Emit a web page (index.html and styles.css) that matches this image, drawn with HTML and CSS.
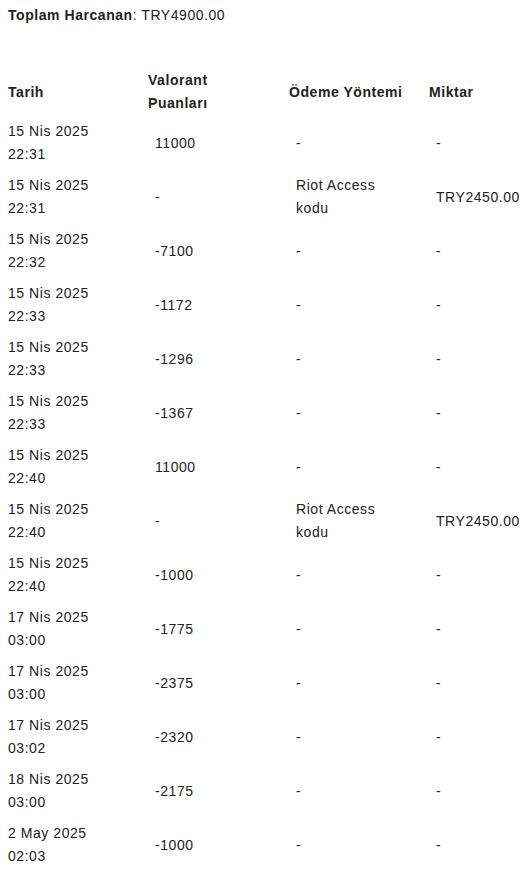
FILE: index.html
```html
<!DOCTYPE html>
<html lang="tr">
<head>
    <meta charset="UTF-8">
    <meta name="viewport" content="width=device-width, initial-scale=1.0">
    <title>Harcama Geçmişi</title>
    <link rel="stylesheet" href="styles.css">
</head>
<body>

<p class="total"><strong>Toplam Harcanan</strong>: TRY4900.00</p>

<table class="history">
    <colgroup>
        <col class="c-date">
        <col class="c-vp">
        <col class="c-method">
        <col class="c-amount">
    </colgroup>
    <thead>
        <tr>
            <th>Tarih</th>
            <th>Valorant Puanları</th>
            <th>Ödeme Yöntemi</th>
            <th>Miktar</th>
        </tr>
    </thead>
    <tbody>
        <tr><td>15 Nis 2025 22:31</td><td>11000</td><td>-</td><td>-</td></tr>
        <tr><td>15 Nis 2025 22:31</td><td>-</td><td>Riot Access kodu</td><td>TRY2450.00</td></tr>
        <tr><td>15 Nis 2025 22:32</td><td>-7100</td><td>-</td><td>-</td></tr>
        <tr><td>15 Nis 2025 22:33</td><td>-1172</td><td>-</td><td>-</td></tr>
        <tr><td>15 Nis 2025 22:33</td><td>-1296</td><td>-</td><td>-</td></tr>
        <tr><td>15 Nis 2025 22:33</td><td>-1367</td><td>-</td><td>-</td></tr>
        <tr><td>15 Nis 2025 22:40</td><td>11000</td><td>-</td><td>-</td></tr>
        <tr><td>15 Nis 2025 22:40</td><td>-</td><td>Riot Access kodu</td><td>TRY2450.00</td></tr>
        <tr><td>15 Nis 2025 22:40</td><td>-1000</td><td>-</td><td>-</td></tr>
        <tr><td>17 Nis 2025 03:00</td><td>-1775</td><td>-</td><td>-</td></tr>
        <tr><td>17 Nis 2025 03:00</td><td>-2375</td><td>-</td><td>-</td></tr>
        <tr><td>17 Nis 2025 03:02</td><td>-2320</td><td>-</td><td>-</td></tr>
        <tr><td>18 Nis 2025 03:00</td><td>-2175</td><td>-</td><td>-</td></tr>
        <tr><td>2 May 2025 02:03</td><td>-1000</td><td>-</td><td>-</td></tr>
    </tbody>
</table>

</body>
</html>
```

FILE: styles.css
```css
body {
    font-family: "Liberation Sans", Arial, sans-serif;
    font-size: 14px;
    line-height: 23px;
    letter-spacing: 0.55px;
    color: #222;
    background: #fff;
    margin: 4px 0 0 8px;
}
.total {
    margin: 0;
}
.total strong {
    font-weight: bold;
}
.history {
    margin-top: 41px;
    border-collapse: collapse;
    table-layout: fixed;
    width: 522px;
}
.c-date { width: 140px; }
.c-vp { width: 141px; }
.c-method { width: 140px; }
.c-amount { width: 101px; }
.history th {
    text-align: left;
    font-weight: bold;
    padding: 1px 30px 1px 0;
    vertical-align: middle;
}
.history th:nth-child(3),
.history th:nth-child(4) {
    padding-right: 0;
}
.history td {
    padding: 4px 40px 4px 7px;
    vertical-align: middle;
}
.history td:first-child {
    padding-left: 0;
}
.history td:last-child {
    padding-right: 0;
}
```
